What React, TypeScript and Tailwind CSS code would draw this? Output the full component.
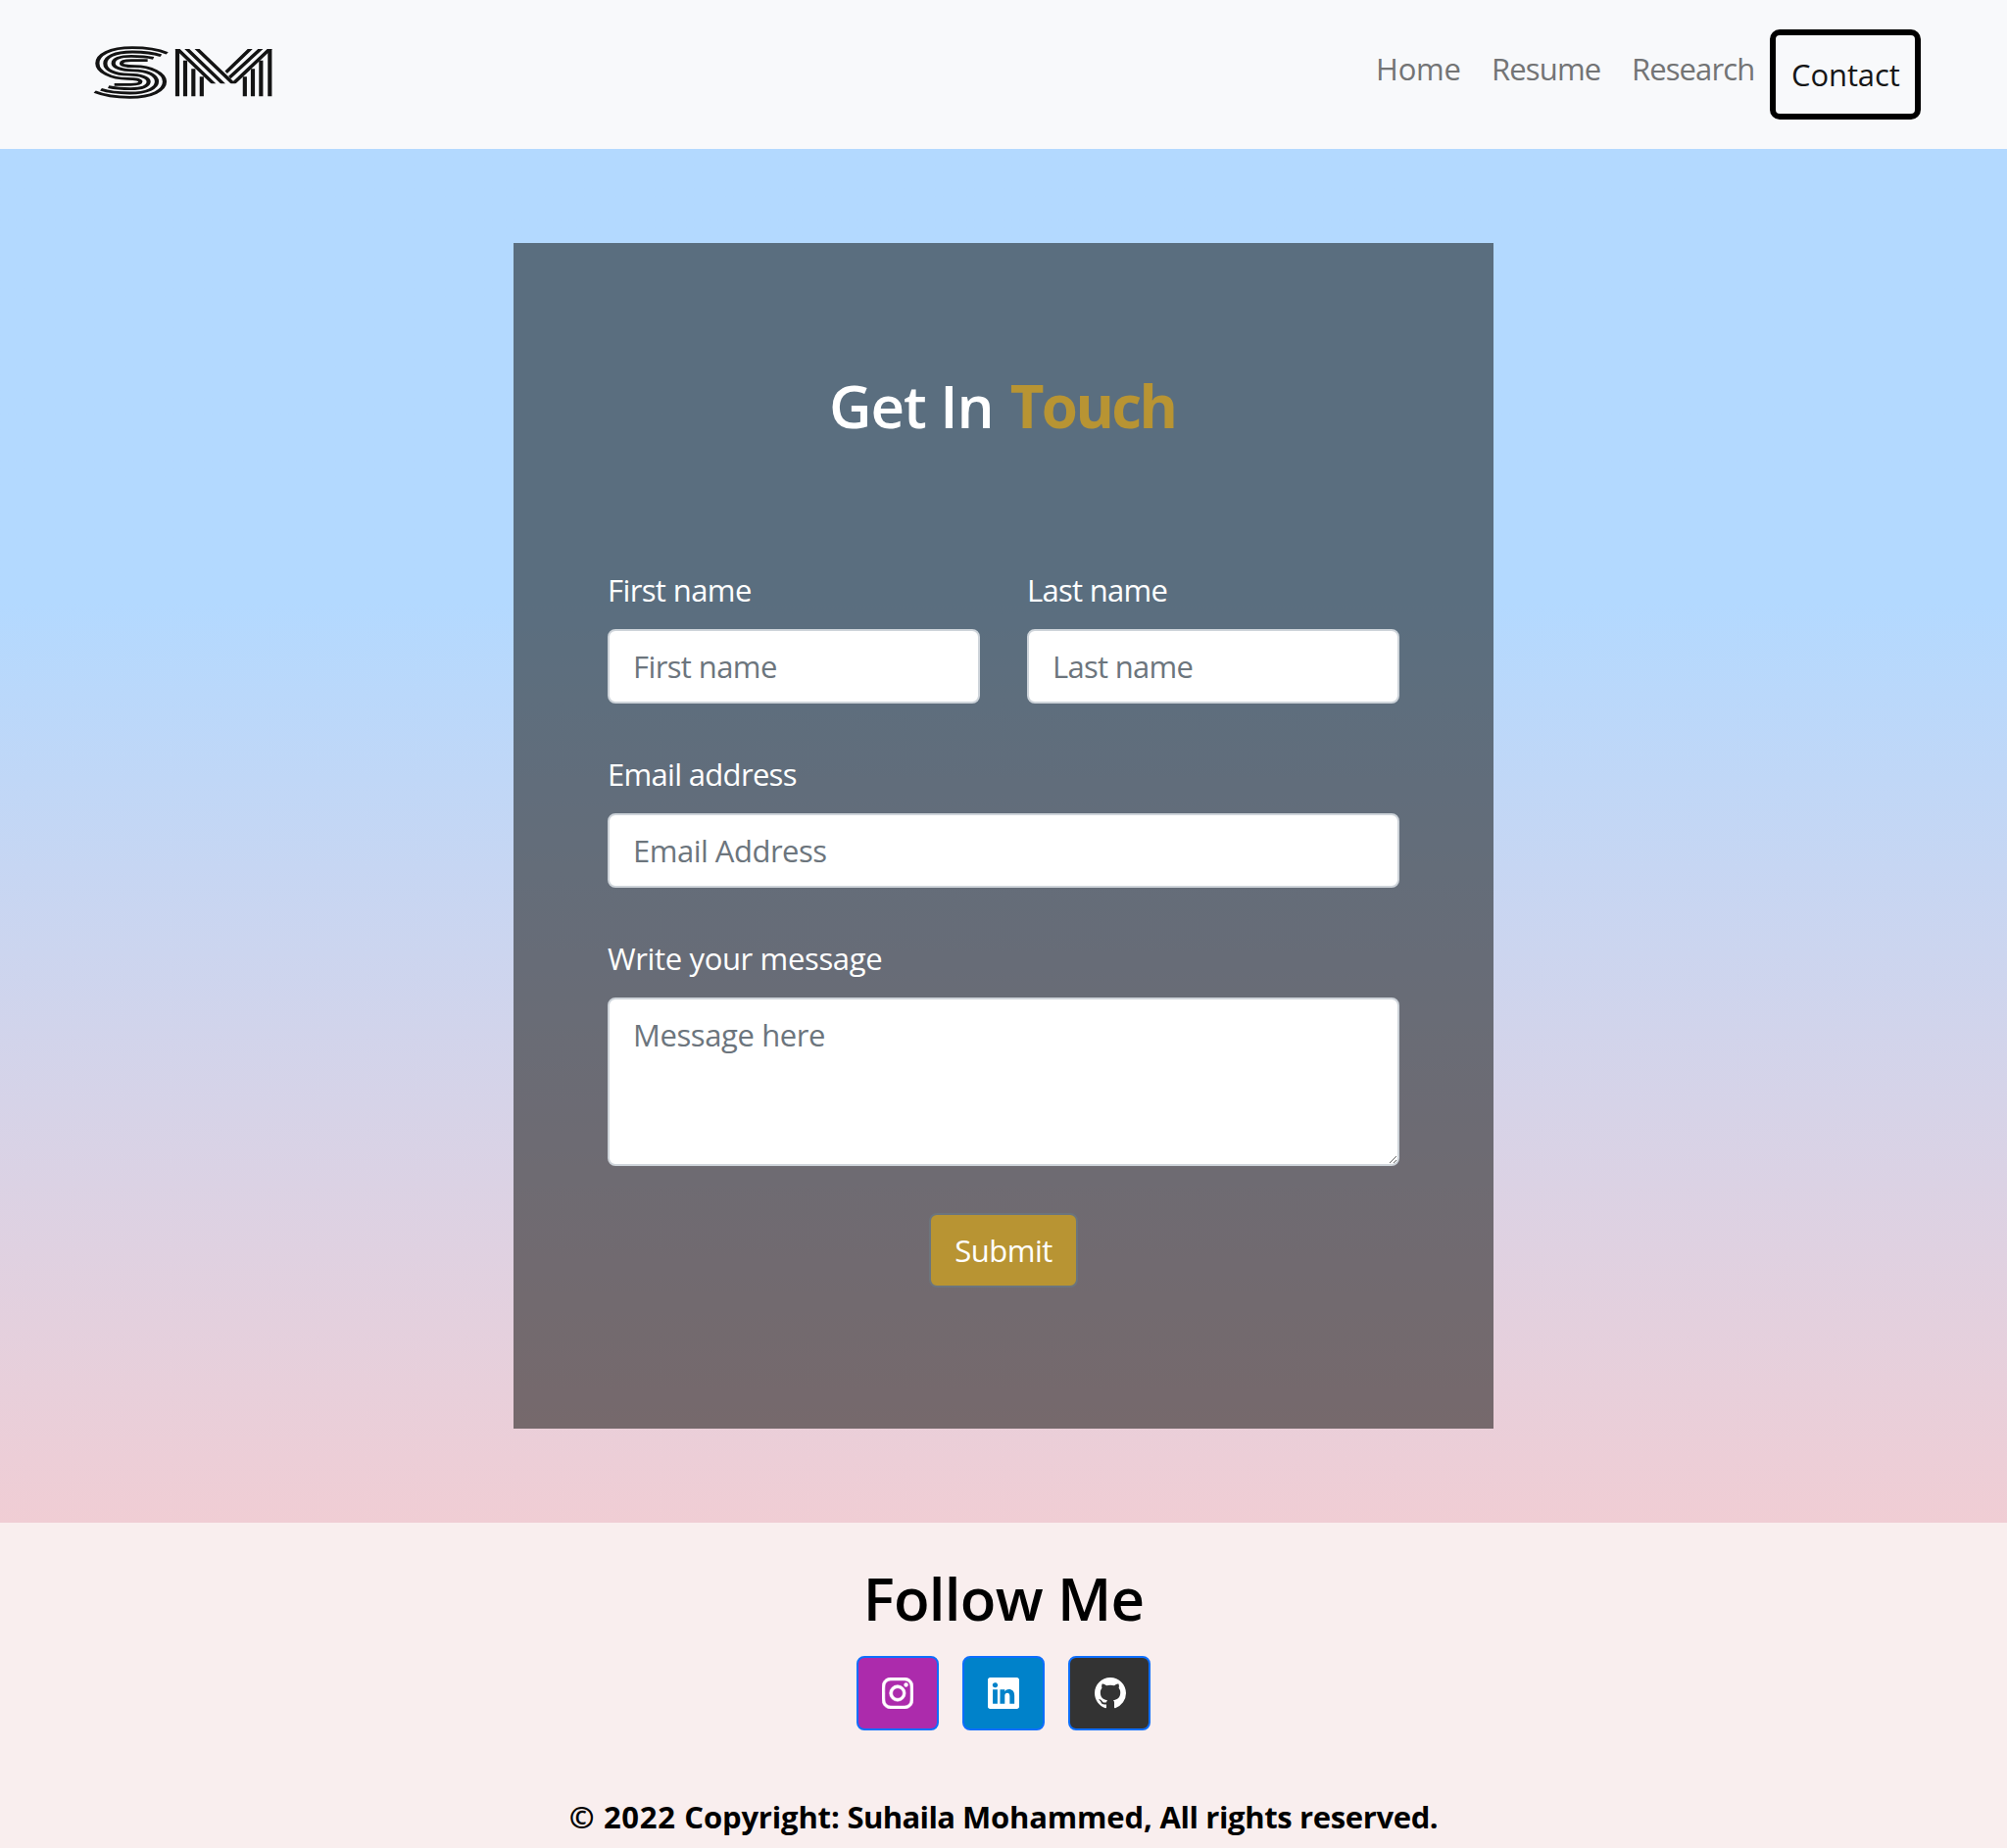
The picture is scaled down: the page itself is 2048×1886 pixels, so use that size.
import type { ReactNode } from "react";
import { BsGithub, BsInstagram, BsLinkedin } from "react-icons/bs";

function Logo() {
  return (
    <svg className="h-[60px] w-[190px]" viewBox="39 39 570 180" fill="none" stroke="#141414">
      <clipPath id="m-bounds">
        <rect x="290" y="60" width="305" height="106" />
      </clipPath>
      <g transform="scale(1.5 1)" strokeWidth="8.400">
        <path d="M181.3 73Q153.3 56 110 56C63.3 56 38.7 78 38.7 104C38.7 130 66.7 151 100 151C116.7 151 126.7 154 126.7 160C126.7 167 116.7 169 106.7 169H73.3" />
        <path d="M168.7 80Q146.7 69 110 69C73.3 69 54.7 85 54.7 104C54.7 124 73.3 138.500 103.3 138.500C126.700 138.500 143.3 148 143.3 160C143.3 174 130 182 106.700 182Q80 182 61.3 176" />
        <path d="M153.3 88Q134.700 82 108 82C84.700 82 71.3 90 71.3 104C71.3 116 88 125.500 111.300 125.500C141.3 125.500 160 140 160 160C160 179 141.3 195 104.700 195Q68 195 46 184" />
        <path d="M141.3 95H108C98 95 88 97 88 104C88 110 98 113 114.700 113C148 113 176 134 176 160C176 186 151.3 208 104.700 208Q61.3 208 33.3 191" />
      </g>
      <g strokeWidth="12.500">
        <path d="M303 60V205M327 95V205M352 121V205M377.500 145V205" />
        <path d="M586 60V205M559 95V205M534 121V205M509.500 145V205" />
      </g>
      <g strokeWidth="10.500" clipPath="url(#m-bounds)">
        <path d="M297 54L418 170M326 54L447 170M357 54L474 166L592 54M564 54L463 147M532 54L452 131" />
      </g>
    </svg>
  );
}

function Field({ label, tracking, children }: { label: string; tracking: string; children: ReactNode }) {
  return (
    <label className="block">
      <span className={`mb-4 block leading-[48px] text-white ${tracking}`}>{label}</span>
      {children}
    </label>
  );
}

const control =
  "block w-full rounded-lg border-2 border-[#ced4da] bg-white px-6 leading-[48px] text-[#212529] outline-none placeholder:text-[#6c757d] placeholder:opacity-100";

function Social({ color, label, children }: { color: string; label: string; children: ReactNode }) {
  return (
    <a
      href="#"
      aria-label={label}
      className={`flex h-[76px] w-[84px] items-center justify-center rounded-lg border-2 border-[#0d6efd] text-[32px] text-white ${color}`}
    >
      {children}
    </a>
  );
}

export default function App() {
  return (
    <div className="flex h-[1886px] flex-col font-['Open_Sans','Noto_Sans',sans-serif] text-[31px] font-normal">
      <header className="flex h-[152px] items-start justify-between bg-[#f8f9fb] pr-[88px] pl-[93px]">
        <a href="#" aria-label="SM" className="mt-[43px]">
          <Logo />
        </a>
        <nav className="mt-[30px] flex items-start leading-[48px] text-[#737475]">
          <a href="#" className="w-[118px] py-4 pl-[17px] tracking-[-0.2px]">Home</a>
          <a href="#" className="w-[143px] py-4 pl-[17px] tracking-[-0.85px]">Resume</a>
          <a href="#" className="w-[158px] py-4 pl-[17px] tracking-[-0.9px]">Research</a>
          <a href="#" className="h-[92px] w-[154px] rounded-[10px] border-6 border-black py-4 pl-4 tracking-[-0.1px] text-[#151617]">
            Contact
          </a>
        </nav>
      </header>

      <main className="h-[1402px] bg-linear-to-b from-[#b3d9ff] from-33% to-[#f0cdd4] pt-24">
        <form className="mx-auto h-[1210px] w-[1000px] bg-[#020300]/50 px-24 pt-[130px]">
          <h1 className="mb-[128px] text-center text-[60px] leading-[72px] font-semibold tracking-[-1.06px] text-white">
            Get In <span className="mx-[2.6px] font-bold tracking-[-2.6px] text-[#b89433]">Touch</span>
          </h1>
          <div className="grid grid-cols-2 gap-x-12 gap-y-12">
            <Field label="First name" tracking="tracking-[-0.6px]">
              <input placeholder="First name" className={`${control} h-[76px] tracking-[-0.6px]`} />
            </Field>
            <Field label="Last name" tracking="tracking-[-0.7px]">
              <input placeholder="Last name" className={`${control} h-[76px] tracking-[-0.7px]`} />
            </Field>
            <div className="col-span-2">
              <Field label="Email address" tracking="tracking-[-0.68px]">
                <input placeholder="Email Address" className={`${control} h-[76px] tracking-[-0.5px]`} />
              </Field>
            </div>
            <div className="col-span-2">
              <Field label="Write your message" tracking="tracking-[-0.36px]">
                <textarea placeholder="Message here" className={`${control} h-[172px] resize py-3 tracking-[-0.4px]`} />
              </Field>
            </div>
          </div>
          <button
            type="button"
            className="mx-auto mt-12 block h-[76px] w-[152px] rounded-lg border-2 border-[#6c757d] bg-[#b89433] leading-[48px] tracking-[-0.48px] text-white"
          >
            Submit
          </button>
        </form>
      </main>

      <footer className="flex flex-1 flex-col items-center bg-[#f9eeee] pt-[41px] text-black">
        <h2 className="text-[60px] leading-[72px] font-semibold tracking-[-0.7px]">Follow Me</h2>
        <div className="mt-[23px] flex gap-6">
          <Social color="bg-[#ac2bac]" label="Instagram"><BsInstagram className="mr-px stroke-current" strokeWidth={0.3} /></Social>
          <Social color="bg-[#0082ca]" label="LinkedIn"><BsLinkedin /></Social>
          <Social color="bg-[#333333]" label="GitHub"><BsGithub className="ml-px" /></Social>
        </div>
        <p className="mt-16 leading-[48px] font-bold tracking-[-0.17px]">
          <span className="tracking-[0.7px]">© 2022 </span>
          <span>Copyright: </span>
          <span className="tracking-[-0.6px]">Suhaila </span>
          <span>Mohammed, </span>
          <span className="tracking-[-0.37px]">All rights reserved.</span>
        </p>
      </footer>
    </div>
  );
}
